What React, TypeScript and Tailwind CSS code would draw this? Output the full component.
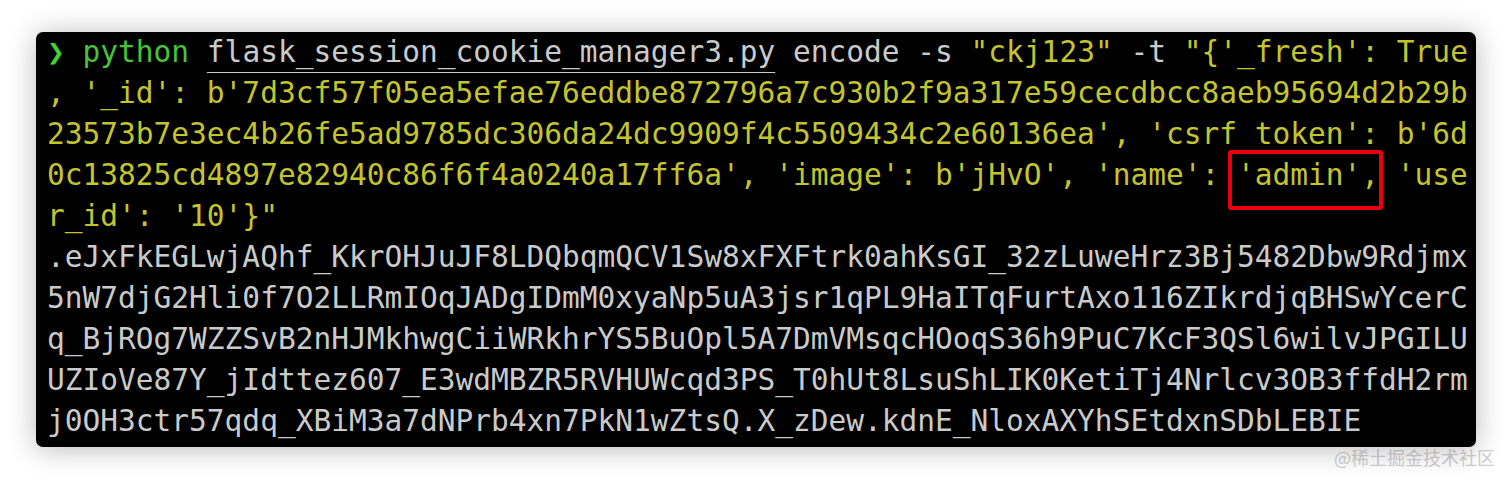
import React from 'react';

type Seg = { text: string; color: 'green' | 'prompt' | 'gray' | 'yellow'; underline?: boolean };

const colorClass: Record<Seg['color'], string> = {
  prompt: 'text-[#3fd42f] font-bold',
  green: 'text-[#47c43a]',
  gray: 'text-[#cacaca]',
  yellow: 'text-[#c4c42e]',
};

const lines: Seg[][] = [
  [
    { text: '❯', color: 'prompt' },
    { text: ' python ', color: 'green' },
    { text: 'flask_session_cookie_manager3.py', color: 'gray', underline: true },
    { text: ' encode -s ', color: 'gray' },
    { text: '"ckj123"', color: 'yellow' },
    { text: ' -t ', color: 'gray' },
    { text: `"{'_fresh': True`, color: 'yellow' },
  ],
  [{ text: `, '_id': b'7d3cf57f05ea5efae76eddbe872796a7c930b2f9a317e59cecdbcc8aeb95694d2b29b`, color: 'yellow' }],
  [{ text: `23573b7e3ec4b26fe5ad9785dc306da24dc9909f4c5509434c2e60136ea', 'csrf_token': b'6d`, color: 'yellow' }],
  [{ text: `0c13825cd4897e82940c86f6f4a0240a17ff6a', 'image': b'jHvO', 'name': 'admin', 'use`, color: 'yellow' }],
  [{ text: `r_id': '10'}"`, color: 'yellow' }],
  [{ text: '.eJxFkEGLwjAQhf_KkrOHJuJF8LDQbqmQCV1Sw8xFXFtrk0ahKsGI_32zLuweHrz3Bj5482Dbw9Rdjmx', color: 'gray' }],
  [{ text: '5nW7djG2Hli0f7O2LLRmIOqJADgIDmM0xyaNp5uA3jsr1qPL9HaITqFurtAxo116ZIkrdjqBHSwYcerC', color: 'gray' }],
  [{ text: 'q_BjROg7WZZSvB2nHJMkhwgCiiWRkhrYS5BuOpl5A7DmVMsqcHOoqS36h9PuC7KcF3QSl6wilvJPGILU', color: 'gray' }],
  [{ text: 'UZIoVe87Y_jIdttez607_E3wdMBZR5RVHUWcqd3PS_T0hUt8LsuShLIK0KetiTj4Nrlcv3OB3ffdH2rm', color: 'gray' }],
  [{ text: 'j0OH3ctr57qdq_XBiM3a7dNPrb4xn7PkN1wZtsQ.X_zDew.kdnE_NloxAXYhSEtdxnSDbLEBIE', color: 'gray' }],
];

const Terminal = () => (
  <div className="relative w-[1440px] rounded-[7px] bg-black pl-[11px] pb-[5px] shadow-[0_2px_28px_rgba(0,0,0,0.28)]">
    <div className="-mt-[3px] font-['DejaVu_Sans_Mono',monospace] text-[29.5px] leading-[41px] whitespace-pre">
      {lines.map((segs, i) => (
        <div key={i}>
          {segs.map((s, j) => (
            <span
              key={j}
              className={`${colorClass[s.color]} ${s.underline ? 'underline decoration-1 underline-offset-[10px]' : ''}`}
            >
              {s.text}
            </span>
          ))}
        </div>
      ))}
    </div>
    {/* highlight around the name value */}
    <div className="absolute left-[1192px] top-[118px] h-[60px] w-[155px] rounded-[3px] border-[4px] border-[#e8000e]" />
  </div>
);

export default function App() {
  return (
    <div className="h-[483px] w-[1512px] bg-white pt-[35px] pl-[36px]">
      <Terminal />
      <div className="flex justify-end pr-[17px] pt-[1px]">
        <span className="font-['Noto_Sans_CJK_SC',sans-serif] text-[18px] leading-[18px] text-[#cfcfcf]">
          @稀土掘金技术社区
        </span>
      </div>
    </div>
  );
}
